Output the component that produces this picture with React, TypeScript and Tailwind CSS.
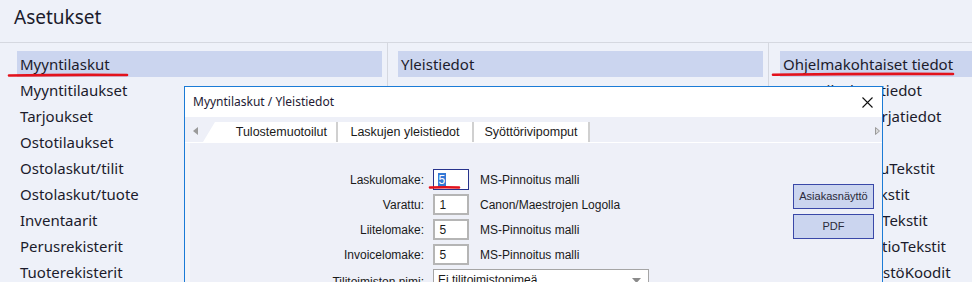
import React from 'react';

const col1 = [
  'Myyntilaskut',
  'Myyntitilaukset',
  'Tarjoukset',
  'Ostotilaukset',
  'Ostolaskut/tilit',
  'Ostolaskut/tuote',
  'Inventaarit',
  'Perusrekisterit',
  'Tuoterekisterit',
];

const col2 = ['Yleistiedot'];

const col3 = [
  'Ohjelmakohtaiset tiedot',
  'Myyntilaskun tiedot',
  'Tositelajien sarjatiedot',
  'Tulostimet',
  'VakuutusLaskuTekstit',
  'PerintäkirjeTekstit',
  'KarhukehotusTekstit',
  'KuvainformaatioTekstit',
  'PalveluympäristöKoodit',
];

interface ColumnProps {
  items: string[];
  className: string;
}

const Column: React.FC<ColumnProps> = ({ items, className }) => (
  <div className={`pt-[8px] ${className}`}>
    {items.map((item, i) => (
      <div
        key={item}
        className={`h-[26px] flex items-center pl-[3px] whitespace-nowrap ${i === 0 ? 'bg-[#cbd5ef]' : ''}`}
      >
        {item}
      </div>
    ))}
  </div>
);

const formRows = [
  { label: 'Laskulomake:', value: '5', desc: 'MS-Pinnoitus malli', focused: true },
  { label: 'Varattu:', value: '1', desc: 'Canon/Maestrojen Logolla', focused: false },
  { label: 'Liitelomake:', value: '5', desc: 'MS-Pinnoitus malli', focused: false },
  { label: 'Invoicelomake:', value: '5', desc: 'MS-Pinnoitus malli', focused: false },
];

const Dialog: React.FC = () => (
  <div className="absolute left-[184px] top-[86px] w-[699px] h-[230px] border border-[#1b7bd6] bg-[#f4f5f9] flex flex-col">
    {/* title bar */}
    <div className="h-[30px] bg-white flex items-center justify-between pl-[8px] pr-[9px] font-['Noto_Sans',sans-serif] text-[12px] text-[#231a33]">
      <span>Myyntilaskut / Yleistiedot</span>
      <svg width="11" height="11" viewBox="0 0 11 11">
        <path d="M0.5 0.5L10.5 10.5M10.5 0.5L0.5 10.5" stroke="#111" strokeWidth="1.1" />
      </svg>
    </div>

    {/* tab strip */}
    <div className="h-[25px] bg-[#eef0f8] flex items-end relative font-['Liberation_Sans',Arial,sans-serif] text-[12.5px] text-[#1a1a1a]">
      <svg className="absolute left-[8px] top-[10px]" width="5" height="8" viewBox="0 0 5 8">
        <path d="M5 0L0 4L5 8Z" fill="#9a9a9a" />
      </svg>
      <div className="ml-[18px] w-[135px] h-[20px] bg-white border-r-2 border-[#d0d0d0] flex items-center justify-end pr-[9px] [clip-path:polygon(12px_0,100%_0,100%_100%,0_100%)]">
        Tulostemuotoilut
      </div>
      <div className="w-[136px] h-[20px] bg-white border-r-2 border-[#d0d0d0] flex items-center justify-center">
        Laskujen yleistiedot
      </div>
      <div className="w-[116px] h-[20px] bg-white border-r-2 border-[#d0d0d0] flex items-center justify-center">
        Syöttörivipomput
      </div>
      <svg className="absolute left-[690px] top-[10px]" width="5" height="8" viewBox="0 0 5 8">
        <path d="M0.5 0.5L4.5 4L0.5 7.5Z" fill="#d8d8d8" stroke="#9a9a9a" strokeWidth="1" />
      </svg>
    </div>
    <div className="h-[1px] bg-white" />

    {/* content */}
    <div className="flex-1 ml-[5px] bg-[#eef0f8] flex font-['Liberation_Sans',Arial,sans-serif] text-[12px] text-[#1a1a1a]">
      <div className="w-[603px] pt-[24px]">
        {formRows.map((row) => (
          <div key={row.label} className="h-[25px] flex items-center">
            <div className="w-[234px] text-right">{row.label}</div>
            <div
              className={`ml-[9px] w-[36px] h-[21px] bg-white flex items-center pl-[4px] ${
                row.focused ? 'border border-[#27338c]' : 'border-2 border-[#b5b5b5]'
              }`}
            >
              {row.focused ? (
                <span className="bg-[#3479d6] text-white leading-[14px] px-[0.5px]">{row.value}</span>
              ) : (
                <span className="pl-[0.5px]">{row.value}</span>
              )}
            </div>
            <div className="ml-[11px]">{row.desc}</div>
          </div>
        ))}
        <div className="h-[25px] flex items-start pt-[2px]">
          <div className="w-[234px] text-right pt-[4px]">Tilitoimiston nimi:</div>
          <div className="ml-[9px] w-[216px] h-[22px] bg-white border border-[#a5a5a5] flex items-center justify-between pl-[4px] pr-[7px]">
            <span>Ei tilitoimistonimeä</span>
            <svg width="9" height="5" viewBox="0 0 9 5">
              <path d="M0 0H9L4.5 5Z" fill="#8a8a8a" />
            </svg>
          </div>
        </div>
      </div>
      <div className="pt-[41px] flex flex-col gap-[5px] text-[11px] text-[#2a2a3a]">
        <div className="w-[81px] h-[25px] bg-[#cbd5ef] border border-[#3a48a8] flex items-center justify-center">
          Asiakasnäyttö
        </div>
        <div className="w-[81px] h-[25px] bg-[#cbd5ef] border border-[#3a48a8] flex items-center justify-center">
          PDF
        </div>
      </div>
    </div>
  </div>
);

export default function App() {
  return (
    <div className="w-[972px] h-[282px] overflow-hidden relative bg-[#eef1f9] text-[#1b1b2c] font-['Noto_Sans',sans-serif]">
      <div className="h-[42px] pl-[14px] pt-[3px] text-[19px]">Asetukset</div>
      <div className="border-t border-[#d5d8e0] flex h-[240px] text-[15px]">
        <Column items={col1} className="w-[388px] pl-[17px] pr-[5px] border-r border-[#d5d8e0]" />
        <Column items={col2} className="w-[381px] pl-[10px] pr-[5px] border-r border-[#d5d8e0]" />
        <Column items={col3} className="flex-1 pl-[11px]" />
      </div>

      <Dialog />

      {/* red annotation marks */}
      <svg className="absolute left-0 top-0 pointer-events-none" width="972" height="282">
        <path d="M9 75.5 Q68 74.5 127 75" stroke="#e3121c" strokeWidth="2.6" strokeLinecap="round" fill="none" />
        <path d="M773 74.8 Q863 73.5 953 74" stroke="#e3121c" strokeWidth="2.6" strokeLinecap="round" fill="none" />
        <path d="M430 187.5 Q445 187 459 187.5" stroke="#e3121c" strokeWidth="2.6" strokeLinecap="round" fill="none" />
      </svg>
    </div>
  );
}
